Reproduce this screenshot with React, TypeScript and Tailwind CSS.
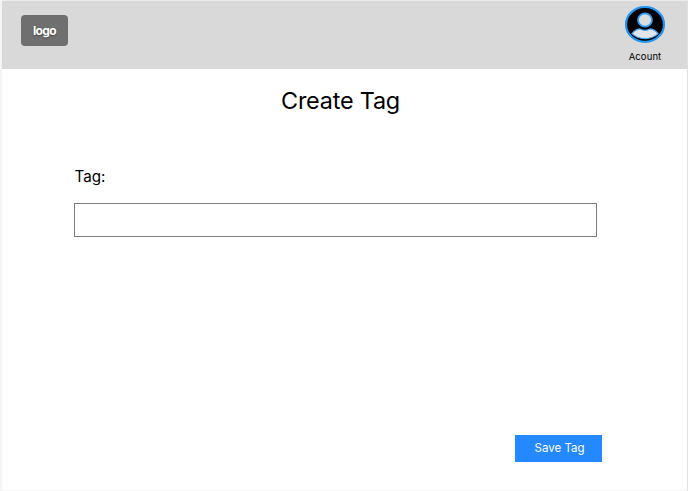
function AccountIcon() {
  return (
    <svg width="42" height="38" viewBox="0 0 42 38" className="block" aria-hidden="true">
      <ellipse cx="21" cy="19.4" rx="19" ry="17.4" fill="#000" stroke="#2196f3" strokeWidth="2.2" />
      <ellipse cx="21" cy="15" rx="7" ry="6.6" fill="#dcdcdc" stroke="#2a9bfb" strokeWidth="1.8" />
      <path
        d="M8 28.6C10 26 13 24.3 16 23.9C19 25.7 23 25.7 26 23.9C29 24.3 32 26 34 28.6C30.5 32 26 33.6 21 33.6C16 33.6 11.5 32 8 28.6Z"
        fill="#e2e6ea"
        stroke="#4dacfb"
        strokeWidth="1.1"
      />
    </svg>
  );
}

export default function App() {
  return (
    <div className="h-[491px] w-[689px] bg-white pl-[2px] pr-px font-['Inter',sans-serif] text-black shadow-[inset_2px_0_0_#f5f5f5]">
      <div className="flex h-[491px] flex-col border-r border-b border-t border-r-[#e0e0e0] border-b-[#f5f5f5] border-t-[#ececec]">
        <header className="flex h-[68px] shrink-0 items-start justify-between bg-[#d9d9d9] pl-[19px] pr-[21px]">
          <button className="mt-[14px] flex h-[31px] w-[47px] items-center justify-center rounded-[4px] bg-[#6f6f6f] pt-px text-[12px] font-bold tracking-[-0.6px] text-white [text-shadow:0_1px_2px_rgba(0,0,0,0.4)]">
            logo
          </button>
          <div className="mt-1 flex w-[42px] flex-col items-center">
            <AccountIcon />
            <span className="mt-[7px] text-[9.5px] leading-[14px] tracking-[0.1px]">Acount</span>
          </div>
        </header>
        <main className="flex flex-1 flex-col pl-[72px]">
          <h1 className="ml-[207px] mt-[18px] text-[23.4px] leading-[28px] tracking-[-0.2px]">Create Tag</h1>
          <label htmlFor="tag" className="ml-[0.5px] mt-[52px] text-[15.2px] leading-[20px]">Tag:</label>
          <input id="tag" className="mt-[16px] h-[34px] w-[523px] border border-[#7d7d7d] bg-white px-2 outline-none" />
          <button className="ml-[441px] mt-[198px] h-[27px] w-[87px] bg-[#2489ff] pl-[2px] text-[11.5px] text-white">
            Save Tag
          </button>
        </main>
      </div>
    </div>
  );
}
